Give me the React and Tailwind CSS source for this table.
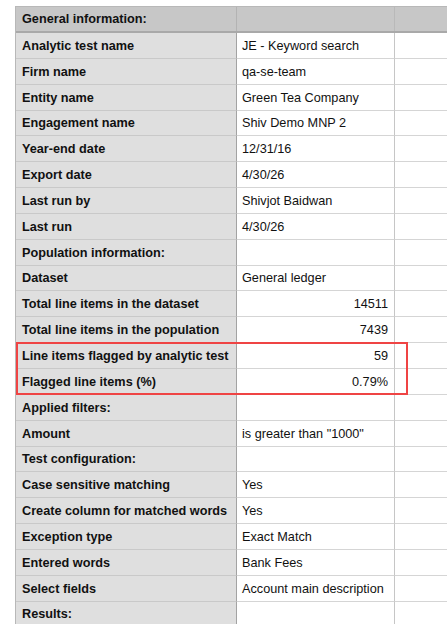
import React from "react";

const rows = [
  ["Analytic test name", "JE - Keyword search"],
  ["Firm name", "qa-se-team"],
  ["Entity name", "Green Tea Company"],
  ["Engagement name", "Shiv Demo MNP 2"],
  ["Year-end date", "12/31/16"],
  ["Export date", "4/30/26"],
  ["Last run by", "Shivjot Baidwan"],
  ["Last run", "4/30/26"],
  ["Population information:", ""],
  ["Dataset", "General ledger"],
  ["Total line items in the dataset", "14511", true],
  ["Total line items in the population", "7439", true],
];

const flagged = [
  ["Line items flagged by analytic test", "59", true],
  ["Flagged line items (%)", "0.79%", true],
];

const rest = [
  ["Applied filters:", ""],
  ["Amount", 'is greater than "1000"'],
  ["Test configuration:", ""],
  ["Case sensitive matching", "Yes"],
  ["Create column for matched words", "Yes"],
  ["Exception type", "Exact Match"],
  ["Entered words", "Bank Fees"],
  ["Select fields", "Account main description"],
  ["Results:", ""],
];

function Row({ label, value, right }) {
  return (
    <div className="flex h-[25.85px]">
      <div className="w-[221px] shrink-0 bg-[#dfdfdf] border-b border-b-[#c9c9c9] border-r border-r-[#a3a3a3] pl-[6px] pt-[2px] flex items-center font-bold whitespace-nowrap overflow-hidden">
        {label}
      </div>
      <div
        className={
          "w-[158px] shrink-0 border-b border-b-[#d5d5d5] border-r border-r-[#c6c6c6] pt-[2px] flex items-center whitespace-nowrap overflow-hidden " +
          (right ? "justify-end pr-[6px]" : "pl-[5px]")
        }
      >
        {value}
      </div>
      <div className="flex-1 border-b border-b-[#d5d5d5]"></div>
    </div>
  );
}

export default function App() {
  return (
    <div className="w-[447px] h-[624px] overflow-hidden bg-white pt-[6px] pl-[15px] font-['Liberation_Sans',Arial,sans-serif] text-[12.7px] text-[#111]">
      <div className="border-l border-t border-[#b8b8b8]">
        <div className="flex h-[26px] bg-[#c7c7c7] border-b-2 border-b-[#a9a9a9]">
          <div className="w-[221px] shrink-0 border-r border-r-[#b3b3b3] pl-[6px] pt-[2px] flex items-center font-bold">
            General information:
          </div>
          <div className="w-[158px] shrink-0 border-r border-r-[#b9b9b9]"></div>
          <div className="flex-1"></div>
        </div>
        {rows.map((r) => (
          <Row key={r[0]} label={r[0]} value={r[1]} right={r[2]} />
        ))}
        <div className="relative">
          {flagged.map((r) => (
            <Row key={r[0]} label={r[0]} value={r[1]} right={r[2]} />
          ))}
          <div className="absolute left-0 top-[-1.5px] bottom-[-0.5px] w-[392px] border-2 border-[#ef4444] pointer-events-none"></div>
        </div>
        {rest.map((r) => (
          <Row key={r[0]} label={r[0]} value={r[1]} right={r[2]} />
        ))}
      </div>
    </div>
  );
}
